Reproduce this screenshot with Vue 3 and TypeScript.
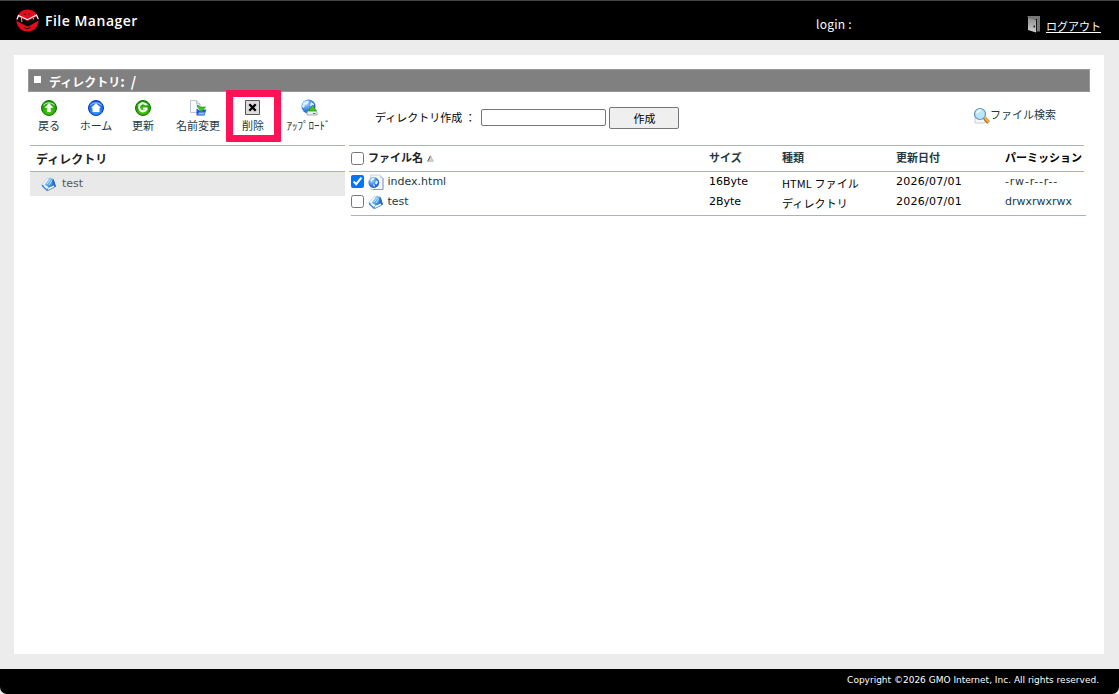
<script setup lang="ts">
import { ref } from 'vue'

interface FileEntry {
  name: string
  icon: 'html' | 'book'
  size: string
  kind: string
  date: string
  permission: string
  checked: boolean
}

interface Tool {
  id: string
  label: string
}

const tools: Tool[] = [
  { id: 'back', label: '戻る' },
  { id: 'home', label: 'ホーム' },
  { id: 'reload', label: '更新' },
  { id: 'rename', label: '名前変更' },
  { id: 'delete', label: '削除' },
  { id: 'upload', label: 'ｱｯﾌﾟﾛｰﾄﾞ' },
]

const files = ref<FileEntry[]>([
  { name: 'index.html', icon: 'html', size: '16Byte', kind: 'HTML ファイル', date: '2026/07/01', permission: '-rw-r--r--', checked: true },
  { name: 'test', icon: 'book', size: '2Byte', kind: 'ディレクトリ', date: '2026/07/01', permission: 'drwxrwxrwx', checked: false },
])

const newDirectory = ref('')
</script>

<template>
  <div class="page">
    <svg class="defs" width="0" height="0">
      <defs>
        <radialGradient id="green" cx=".5" cy=".7" r=".6">
          <stop offset="0" stop-color="#55cf12" /><stop offset="1" stop-color="#159300" />
        </radialGradient>
        <radialGradient id="blue" cx=".5" cy=".7" r=".6">
          <stop offset="0" stop-color="#3fa4ff" /><stop offset="1" stop-color="#125be8" />
        </radialGradient>
        <radialGradient id="globe" cx=".35" cy=".3" r=".8">
          <stop offset="0" stop-color="#9ed4ff" /><stop offset=".55" stop-color="#3d86df" /><stop offset="1" stop-color="#1450ac" />
        </radialGradient>
        <linearGradient id="cover" x1="0" y1="0" x2="1" y2="1">
          <stop offset="0" stop-color="#c9e9fc" /><stop offset=".45" stop-color="#5eaeea" /><stop offset="1" stop-color="#0d49ae" />
        </linearGradient>
        <linearGradient id="door" x1="0" y1="0" x2="0" y2="1">
          <stop offset="0" stop-color="#888" /><stop offset="1" stop-color="#d0d0d0" />
        </linearGradient>
        <symbol id="book" viewBox="0 0 16 16">
          <path d="M.8 8.500 6.500 2.300l2.300.5L3.500 9.800z" fill="#f3f9fe" stroke="#a8c8e6" stroke-width=".7" />
          <path d="M3.500 9 9 1.500 12.500 3 14.800 10.500 8.500 12.500z" fill="url(#cover)" />
          <path d="M12.500 3 15 10.500 13 11.500 11 5z" fill="#2467c4" />
          <path d="m.8 8.700 2 .6 4.700 3.500-1.500 2.400L1 10.500z" fill="#3e86d2" />
          <path d="m2 9.800 4 3.400 1.500-2.200-3.500-2z" fill="#e4f3fd" />
          <path d="m6.500 14.500 1.700-3 4.800-2 .5 1.700z" fill="#fff" />
          <path d="m6.300 14.800 7.200-3.600" fill="none" stroke="#3975bc" stroke-width=".8" />
          <path d="m6 8 3.500-4.500M8 9l3-4.500" stroke="#d5f0ff" stroke-width=".8" />
        </symbol>
      </defs>
    </svg>

    <header class="header">
      <div class="brand">
        <svg class="logo" width="24" height="24" viewBox="0 0 24 24">
          <circle cx="11.500" cy="12.500" r="11" fill="#e60b19" />
          <path d="M1 8.500 11.500 13 22 8l.6 4.500L12 18.800.600 13z" fill="#080808" />
          <path d="M1 11.500 2.500 7.500l9 4.200L20.500 7 22.300 11" fill="none" stroke="#fff" stroke-width="1.200" />
          <path d="m5.500 10 .4 4M17.500 10v1.500" stroke="#ddd" stroke-width=".8" />
          <path d="M8 19.500c2 1.500 5 1.500 7-.5M8 6l2 .5M14 5l-1.500 1.500" fill="none" stroke="#38060a" />
        </svg>
        <span class="brand-name">File Manager</span>
      </div>
      <span class="login">login :</span>
      <a class="logout">
        <svg width="14" height="17" viewBox="0 0 14 17">
          <path d="M0 0h13v15.500H8V4L1 1z" fill="#777" />
          <path d="M8.500 3h1.500v12H8.500z" fill="#171717" />
          <path d="M1 1 9 4v12.500L1 14z" fill="url(#door)" />
          <path d="M6.500 9.500h1.500v2H6.500z" fill="#222" />
        </svg>
        <span>ログアウト</span>
      </a>
    </header>

    <main class="panel">
      <h1 class="title"><i class="square"></i><span>ディレクトリ<span class="path">: /</span></span></h1>

      <div class="toolbar">
        <div class="tools">
          <a v-for="tool in tools" :key="tool.id" class="tool" :class="tool.id">
            <svg v-if="tool.id === 'back'" width="18" height="18" viewBox="0 0 18 18">
              <circle cx="9" cy="9" r="7.500" fill="url(#green)" stroke="#0d7c00" />
              <path d="M3.500 6.500a6 4.500 0 0 1 11 0" fill="none" stroke="#9be68a" stroke-width="1.200" />
              <path d="m9 4 4.500 4.800h-2.800V13H7.300V8.800H4.500z" fill="#fff" />
            </svg>
            <svg v-else-if="tool.id === 'home'" width="18" height="18" viewBox="0 0 18 18">
              <circle cx="9" cy="9" r="7.500" fill="url(#blue)" stroke="#0a3fb5" />
              <path d="M3.500 6.500a6 4.500 0 0 1 11 0" fill="none" stroke="#8abaff" stroke-width="1.200" />
              <path d="m9 4.300 5 4.400h-1.500V13h-7V8.700H4z" fill="#fff" />
            </svg>
            <svg v-else-if="tool.id === 'reload'" width="18" height="18" viewBox="0 0 18 18">
              <circle cx="9" cy="9" r="7.500" fill="url(#green)" stroke="#0d7c00" />
              <path d="M3.500 6.500a6 4.500 0 0 1 11 0" fill="none" stroke="#9be68a" stroke-width="1" />
              <path d="M12.500 6.200A4 4 0 1 0 12.500 10.500V9.500H9" fill="none" stroke="#fff" stroke-width="2" />
            </svg>
            <svg v-else-if="tool.id === 'rename'" width="18" height="18" viewBox="0 0 18 18">
              <path d="M1.500 1.500h6l3.500 3.500v8.500H1.500z" fill="#f8fbff" stroke="#b5bdd0" stroke-width=".9" />
              <path d="M7.500 1.500V5H11" fill="#dae1ee" stroke="#a8b6cc" stroke-width=".8" />
              <path d="M7.500 9.500v7h8l1.800-6h-3l-2 2z" fill="#1f5bd0" />
              <path d="m9 15.500 1-2h6l-1 2z" fill="#96c6fb" />
              <path d="M8 6.500c2.500-.3 2.500 1 3.500 1.500h5l-4 4.500L8.500 8z" fill="#42c51f" stroke="#198a00" stroke-width=".6" />
            </svg>
            <svg v-else-if="tool.id === 'delete'" width="18" height="18" viewBox="0 0 18 18">
              <path d="M1.500 1.500h14v14h-14z" fill="#dcdcdc" stroke="#555" />
              <path d="m5.300 5.300 6.400 6.400m0-6.400-6.400 6.400" stroke="#000" stroke-width="2.300" />
            </svg>
            <svg v-else width="18" height="18" viewBox="0 0 18 18">
              <circle cx="8.500" cy="7.500" r="7" fill="url(#globe)" />
              <path d="M3 4q3-3 6-2L8 5 5 6 4 9 2 8zM11 3l3 2-1 3-3-1z" fill="#dcf0ff" />
              <path d="M8.500 11.500h7l1.500 2V16H7v-2.500z" fill="#eeeef4" stroke="#8999aa" stroke-width=".8" />
              <path d="M12.500 6 16.500 12h-8z" fill="#49c52a" stroke="#178000" stroke-width=".6" />
              <path d="M13 14.500h2.500" stroke="#25b000" />
            </svg>
            <span>{{ tool.label }}</span>
          </a>
        </div>
        <form class="create" @submit.prevent>
          <label for="dir">ディレクトリ作成 ：</label>
          <input id="dir" v-model="newDirectory" type="text" />
          <button type="submit">作成</button>
        </form>
        <a class="search">
          <svg width="17" height="18" viewBox="0 0 17 18">
            <path d="M2 6h10v10H2z" fill="#f5f7fb" stroke="#bac4d3" stroke-width=".8" />
            <circle cx="7" cy="7" r="5.500" fill="#bce5fa" stroke="#6298bd" stroke-width="1.200" />
            <path d="M4 6q1-3 4-2.500" stroke="#fff" fill="none" stroke-width="1.500" />
            <path d="m11.500 11 4 4.500" stroke="#a55b12" stroke-width="3.400" />
            <path d="m11.500 10.500 4 4.500" stroke="#ffb236" stroke-width="2" />
          </svg>
          <span>ファイル検索</span>
        </a>
        <div class="highlight"></div>
      </div>

      <div class="columns">
        <section class="tree">
          <h2>ディレクトリ</h2>
          <a class="tree-row">
            <svg width="16" height="16"><use href="#book" /></svg>
            <span>test</span>
          </a>
        </section>

        <section class="list">
          <div class="row head">
            <input type="checkbox" aria-label="all" />
            <span class="name jp">ファイル名
              <svg width="7" height="7" viewBox="0 0 7 7"><path d="M3.500.8.700 6.300h5.600z" fill="#d5d2c8" /><path d="M3.500.8.700 6.300" stroke="#444" stroke-width=".9" /><path d="M3.500.8 6.300 6.300H.7" stroke="#aaa" stroke-width=".7" fill="none" /></svg>
            </span>
            <span class="jp">サイズ</span>
            <span class="jp">種類</span>
            <span class="jp">更新日付</span>
            <span class="jp black">パーミッション</span>
          </div>
          <div class="body">
            <div v-for="file in files" :key="file.name" class="row">
              <input v-model="file.checked" type="checkbox" :aria-label="file.name" />
              <span class="name">
                <svg v-if="file.icon === 'html'" width="16" height="16" viewBox="0 0 16 16">
                  <path d="M2.500 1h9.500l3 3v11.500H3z" fill="#f6f8fc" stroke="#c0c9da" stroke-width=".8" />
                  <path d="M12 1v3h3z" fill="#c6cfdf" />
                  <path d="M15 4v11.500H5" fill="none" stroke="#8c9bb8" />
                  <circle cx="5.800" cy="8.500" r="5.400" fill="url(#globe)" />
                  <path d="M2 6q2-3 5-2.500l-1 2-2 1v2zM8 6.500l2 1-1 3-2-1zM5 10l2 1-1 2z" fill="#e1f4ff" />
                </svg>
                <svg v-else width="16" height="16"><use href="#book" /></svg>
                <span class="link">{{ file.name }}</span>
              </span>
              <span>{{ file.size }}</span>
              <span class="kind">{{ file.kind }}</span>
              <span class="date">{{ file.date }}</span>
              <span class="perm" :class="{ spread: file.icon === 'html' }">{{ file.permission }}</span>
            </div>
          </div>
        </section>
      </div>
    </main>

    <footer class="footer">Copyright ©2026 GMO Internet, Inc. All rights reserved.</footer>
  </div>
</template>

<style>
body {
  margin: 0;
  background: #ececec;
}
</style>

<style scoped>
* {
  box-sizing: border-box;
}
.page {
  height: 694px;
  overflow: hidden;
  display: flex;
  flex-direction: column;
  background: #ececec;
  color: #000;
  font: 11px/20px "DejaVu Sans", "Noto Sans CJK JP", sans-serif;
}
.defs {
  position: absolute;
}
svg {
  display: block;
  flex: none;
}
.header {
  height: 40px;
  flex: none;
  display: flex;
  background: #000;
  border-top: 1px solid #444;
  color: #fff;
}
.brand {
  display: flex;
  width: 816px;
  padding: 7px 0 0 16px;
  gap: 5px;
}
.brand-name {
  font: 600 14px/26px "Open Sans", sans-serif;
  letter-spacing: 0.5px;
}
.login {
  width: 211px;
  padding-top: 13px;
  font: 12px/20px "Noto Sans CJK JP", sans-serif;
  letter-spacing: 0.25px;
}
.logout {
  display: flex;
  gap: 5px;
  padding-top: 15px;
  font: 11px/20px "Noto Sans CJK JP", sans-serif;
}
.logout span {
  height: 17px;
  border-bottom: 1px solid #fff;
}
.panel {
  width: 1090px;
  height: 599px;
  flex: none;
  margin: 15px 0 15px 14px;
  padding: 14px 14px 0;
  background: #fff;
}
.title {
  display: flex;
  gap: 8px;
  height: 23px;
  margin: 0;
  padding-left: 5px;
  border: 1px solid #999;
  background: #808080;
  color: #fff;
  font: bold 12px/22px "Noto Sans CJK JP", sans-serif;
}
.path {
  font-size: 14px;
  letter-spacing: 1.4px;
}
.square {
  width: 7px;
  height: 7px;
  margin-top: 6px;
  background: #fff;
}
.toolbar {
  position: relative;
  display: flex;
  height: 53px;
  font: 11px/17px "Noto Sans CJK JP", sans-serif;
}
.tools {
  display: flex;
  width: 347px;
  padding-top: 7px;
}
.tool {
  display: flex;
  flex-direction: column;
  align-items: center;
  width: 47px;
  color: #233a44;
  white-space: nowrap;
}
.back {
  width: 42px;
}
.home {
  width: 52px;
}
.reload {
  width: 42px;
}
.rename {
  width: 68px;
}
.delete {
  width: 42px;
}
.upload {
  width: 69px;
}
.create {
  display: flex;
  width: 598px;
  padding-top: 15px;
}
.create label {
  width: 106px;
  line-height: 21px;
}
.create input {
  width: 125px;
  height: 17px;
  margin: 2px 3px 0 0;
  padding: 0;
  border: 1px solid #767676;
  border-radius: 2px;
}
.create button {
  width: 70px;
  height: 22px;
  padding: 0 0 0 1px;
  border: 1px solid #767676;
  border-radius: 2px;
  background: #efefef;
  font: 11px/20px "Noto Sans CJK JP", sans-serif;
}
.search {
  display: flex;
  padding-top: 15px;
  color: #233a44;
}
.search span {
  line-height: 15px;
}
.highlight {
  position: absolute;
  left: 198px;
  top: -2px;
  width: 55px;
  height: 52px;
  border: 7px solid #ff1356;
  border-radius: 1px;
}
.columns {
  display: flex;
  gap: 4px;
  padding-left: 2px;
}
.tree {
  width: 315px;
}
.tree h2 {
  height: 27px;
  margin: 0;
  padding-left: 6px;
  border: solid #aaaadd;
  border-width: 1px 0;
  color: #222;
  font: bold 12px/25px "Noto Sans CJK JP", sans-serif;
}
.tree-row {
  display: flex;
  gap: 5px;
  height: 24px;
  padding: 4px 0 0 11px;
  background: #e9e9e9;
  color: #555;
  line-height: 15px;
}
.list {
  width: 737px;
}
.row {
  display: grid;
  grid-template-columns: 17px 341px 73px 114px 109px 1fr;
  height: 20px;
}
.row input {
  width: 13px;
  height: 13px;
  margin: 3px 0 0;
}
.head {
  width: 735px;
  height: 27px;
  padding-left: 2px;
  border: solid #aaaadd;
  border-width: 1px 0;
}
.head input {
  margin-top: 6px;
}
.jp {
  color: #233a44;
  font: bold 11px/23px "Noto Sans CJK JP", sans-serif;
}
.name {
  display: flex;
  gap: 3.5px;
}
.head .name {
  color: #222;
}
.head .name svg {
  margin-top: 9px;
}
.name svg {
  margin-top: 2px;
}
.link,
.perm {
  color: #233a44;
}
.spread {
  letter-spacing: 0.8px;
}
.date {
  letter-spacing: 0.25px;
}
.black {
  color: #000;
}
.body {
  height: 44px;
  margin-left: 2px;
  border-bottom: 1px solid #aaaadd;
}
.kind {
  font: 11px/22px "Noto Sans CJK JP", sans-serif;
  letter-spacing: 0.1px;
}
.footer {
  flex: 1;
  padding-right: 20px;
  background: #000;
  border-radius: 0 0 7px 7px;
  color: #fff;
  font-size: 9px;
  line-height: 22px;
  text-align: right;
}
</style>
